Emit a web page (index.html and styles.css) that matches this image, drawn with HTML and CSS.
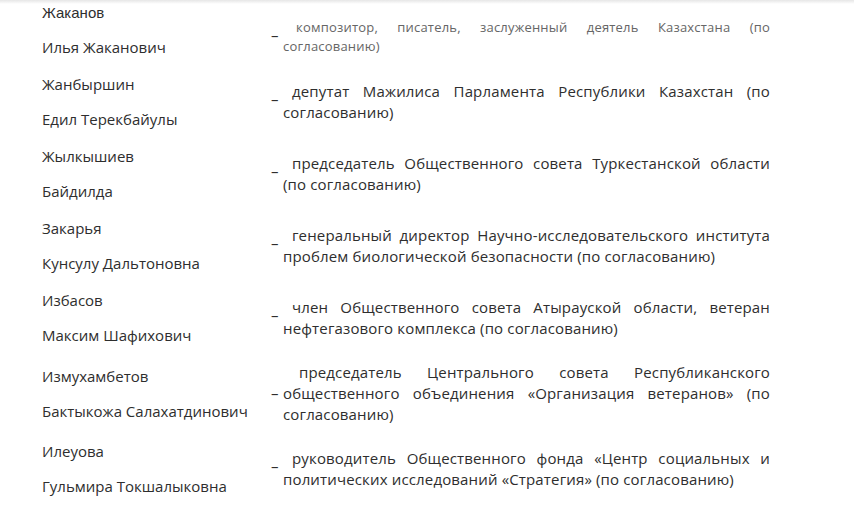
FILE: index.html
```html
<!DOCTYPE html>
<html lang="ru">
<head>
<meta charset="utf-8">
<link rel="stylesheet" href="styles.css">
</head>
<body>
<div class="shadow"></div>
<div class="wrap">
<table class="list">
<tr class="row first">
  <td class="name"><p class="alt">Жаканов</p><p>Илья Жаканович</p></td>
  <td class="dash low">–</td>
  <td class="desc small"><span class="ln j">композитор, писатель, заслуженный деятель Казахстана (по</span><span class="ln">согласованию)</span></td>
</tr>
<tr class="row">
  <td class="name"><p>Жанбыршин</p><p>Едил Терекбайулы</p></td>
  <td class="dash">–</td>
  <td class="desc"><span class="ln j">депутат Мажилиса Парламента Республики Казахстан (по</span><span class="ln">согласованию)</span></td>
</tr>
<tr class="row">
  <td class="name"><p>Жылкышиев</p><p>Байдилда</p></td>
  <td class="dash">–</td>
  <td class="desc"><span class="ln j">председатель Общественного совета Туркестанской области</span><span class="ln">(по согласованию)</span></td>
</tr>
<tr class="row">
  <td class="name"><p>Закарья</p><p>Кунсулу Дальтоновна</p></td>
  <td class="dash">–</td>
  <td class="desc"><span class="ln j">генеральный директор Научно-исследовательского института</span><span class="ln">проблем биологической безопасности (по согласованию)</span></td>
</tr>
<tr class="row">
  <td class="name"><p>Избасов</p><p>Максим Шафихович</p></td>
  <td class="dash">–</td>
  <td class="desc"><span class="ln j">член Общественного совета Атырауской области, ветеран</span><span class="ln">нефтегазового комплекса (по согласованию)</span></td>
</tr>
<tr class="row">
  <td class="name"><p>Измухамбетов</p><p>Бактыкожа Салахатдинович</p></td>
  <td class="dash mid">–</td>
  <td class="desc"><span class="ln j ind">председатель Центрального совета Республиканского</span><span class="ln j noind">общественного объединения «Организация ветеранов» (по</span><span class="ln">согласованию)</span></td>
</tr>
<tr class="row">
  <td class="name"><p>Илеуова</p><p>Гульмира Токшалыковна</p></td>
  <td class="dash">–</td>
  <td class="desc"><span class="ln j">руководитель Общественного фонда «Центр социальных и</span><span class="ln">политических исследований «Стратегия» (по согласованию)</span></td>
</tr>
</table>
</div>
</body>
</html>
```
FILE: styles.css
```css
html, body {
  margin: 0;
  padding: 0;
  background: #fff;
}
body {
  font-family: "Open Sans", "DejaVu Sans", sans-serif;
  color: #2e2e2e;
  overflow: hidden;
  position: relative;
}
.shadow {
  position: absolute;
  left: 0;
  top: 0;
  width: 100%;
  height: 4px;
  background: linear-gradient(to bottom, #e6e6e6, rgba(255,255,255,0));
  z-index: 2;
}
.wrap {
  padding-left: 42px;
  margin-top: -6px;
}
.list {
  border-collapse: collapse;
}
.row td {
  padding: 0;
  vertical-align: middle;
}
.name {
  width: 229px;
  padding: 8px 0 !important;
  font-size: 15px;
}
.name p {
  margin: 0;
  line-height: 21px;
  white-space: nowrap;
}
.name p + p {
  margin-top: 14px;
}
.name p.alt {
  font-family: "Liberation Sans", Arial, sans-serif;
}
.dash {
  width: 12px;
  font-size: 15px;
  line-height: 21px;
  padding-bottom: 5px !important;
}
.dash.mid {
  padding-bottom: 0 !important;
}
.dash.low {
  padding-bottom: 0 !important;
  padding-top: 10px !important;
}
.desc {
  width: 487px;
  padding: 8px 0 !important;
  font-size: 15px;
  line-height: 21px;
  letter-spacing: 0.15px;
}
.desc .ln {
  display: block;
  text-align: left;
}
.desc .ln.j {
  text-align: justify;
  text-align-last: justify;
  text-indent: 9px;
}
.desc .ln.ind {
  text-indent: 16px;
}
.desc .ln.noind {
  text-indent: 0;
}
.desc.small {
  font-size: 13px;
  line-height: 19px;
  color: #666;
  padding-top: 21px !important;
  letter-spacing: 0.2px;
}
.desc.small .ln.j {
  text-indent: 13px;
}
```
